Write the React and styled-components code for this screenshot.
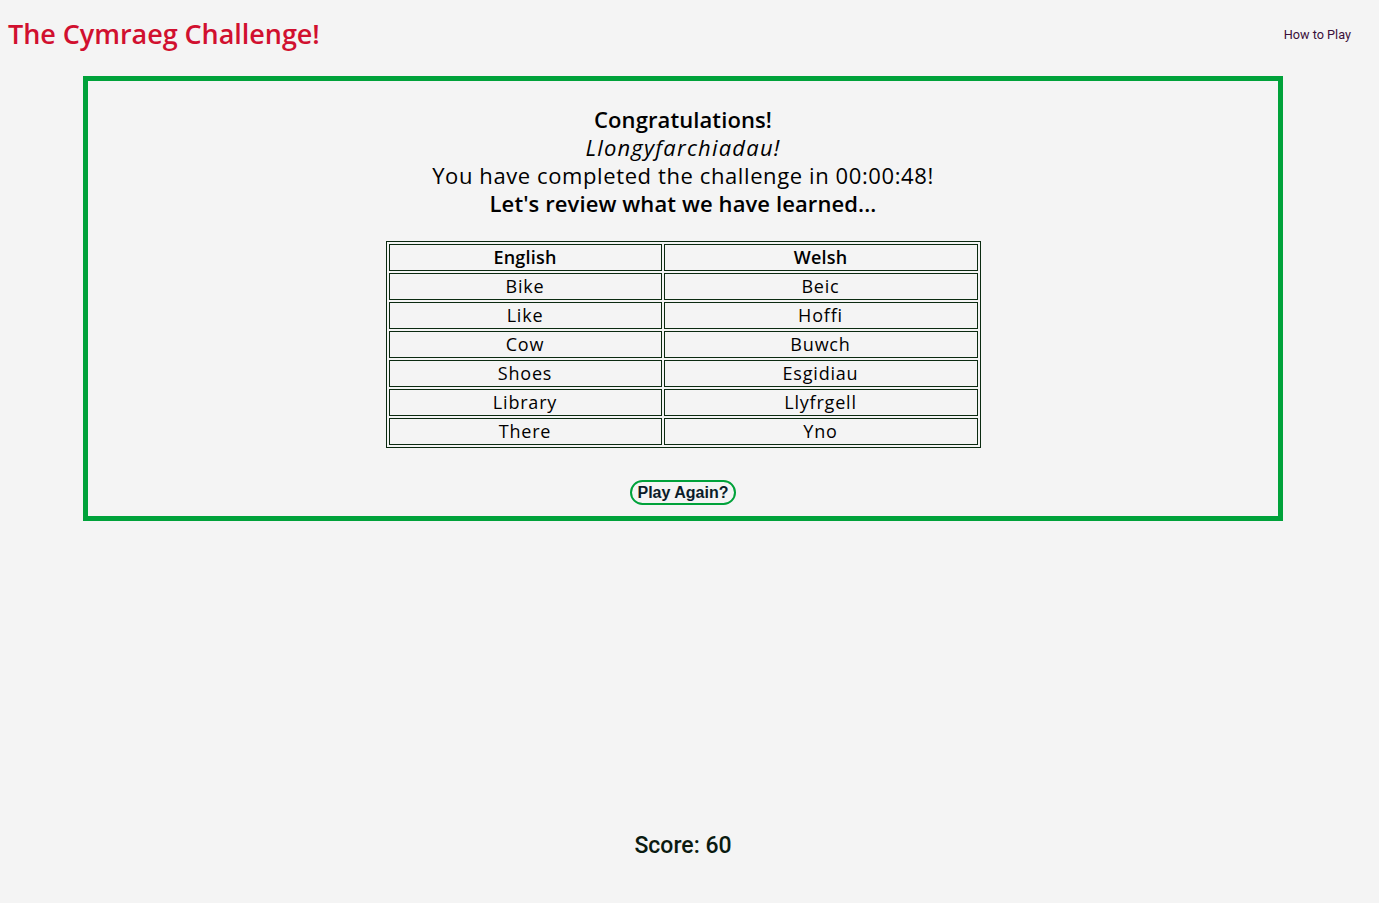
import styled, { createGlobalStyle } from "styled-components";

const GlobalStyle = createGlobalStyle`
  body {
    margin: 0;
    background: #f4f4f4;
    font-family: "Open Sans", "Liberation Sans", sans-serif;
    color: #000;
  }
`;

const Page = styled.div`
  min-height: 903px;
  display: flex;
  flex-direction: column;
`;

const Header = styled.header`
  display: flex;
  justify-content: space-between;
  align-items: center;
  padding: 13px 28px 0 8px;
  box-sizing: border-box;
  height: 56px;
`;

const Title = styled.h1`
  margin: 0 0 3px;
  font-size: 27px;
  font-weight: 600;
  color: #d1102f;
  letter-spacing: -0.05px;
`;

const HelpLink = styled.a`
  font-family: Roboto, "Liberation Sans", sans-serif;
  font-size: 12.7px;
  color: #3b0f3a;
  text-decoration: none;
  margin-bottom: 1px;
`;

const Board = styled.main`
  width: 1200px;
  box-sizing: border-box;
  margin: 20px 0 0 83px;
  border: 5px solid #00a23a;
  padding: 24px 0 11px;
  display: flex;
  flex-direction: column;
  align-items: center;
`;

const Message = styled.div`
  text-align: center;
  font-size: 22px;
  line-height: 28px;
`;

const Line = styled.div`
  font-weight: ${(p) => (p.$bold ? 600 : 400)};
  font-style: ${(p) => (p.$italic ? "italic" : "normal")};
  letter-spacing: ${(p) => (p.$bold ? "0.1px" : p.$italic ? "1.2px" : "0.6px")};
`;

const WordTable = styled.table`
  width: 595px;
  margin-top: 24px;
  border: 1px solid #0b2a10;
  border-spacing: 2px;
  font-size: 18px;
  letter-spacing: 0.8px;
`;

const Cell = styled.td`
  border: 1px solid #0b2a10;
  text-align: center;
  height: 25px;
  padding: 0;
  line-height: 25px;
  width: ${(p) => p.$w || "auto"};
`;

const HeadCell = styled(Cell).attrs({ as: "th" })`
  font-weight: 600;
  letter-spacing: 0.2px;
`;

const Button = styled.button`
  margin-top: 32px;
  font-family: "Liberation Sans", Arial, sans-serif;
  font-weight: 700;
  font-size: 16px;
  color: #0b1c2a;
  background: transparent;
  border: 2px solid #00a23a;
  border-radius: 13px;
  padding: 0 6px;
  height: 25px;
  cursor: pointer;
`;

const Score = styled.div`
  width: 1200px;
  margin: 311px 0 0 83px;
  text-align: center;
  font-family: Roboto, "Liberation Sans", sans-serif;
  font-weight: 500;
  font-size: 23px;
  color: #0a1a10;
`;

const words = [
  ["Bike", "Beic"],
  ["Like", "Hoffi"],
  ["Cow", "Buwch"],
  ["Shoes", "Esgidiau"],
  ["Library", "Llyfrgell"],
  ["There", "Yno"],
];

export default function App() {
  return (
    <Page>
      <GlobalStyle />
      <Header>
        <Title>The Cymraeg Challenge!</Title>
        <HelpLink href="#">How to Play</HelpLink>
      </Header>
      <Board>
        <Message>
          <Line $bold>Congratulations!</Line>
          <Line $italic>Llongyfarchiadau!</Line>
          <Line>You have completed the challenge in 00:00:48!</Line>
          <Line $bold>Let's review what we have learned...</Line>
        </Message>
        <WordTable>
          <thead>
            <tr>
              <HeadCell $w="271px">English</HeadCell>
              <HeadCell>Welsh</HeadCell>
            </tr>
          </thead>
          <tbody>
            {words.map(([en, cy]) => (
              <tr key={en}>
                <Cell>{en}</Cell>
                <Cell>{cy}</Cell>
              </tr>
            ))}
          </tbody>
        </WordTable>
        <Button>Play Again?</Button>
      </Board>
      <Score>Score: 60</Score>
    </Page>
  );
}
